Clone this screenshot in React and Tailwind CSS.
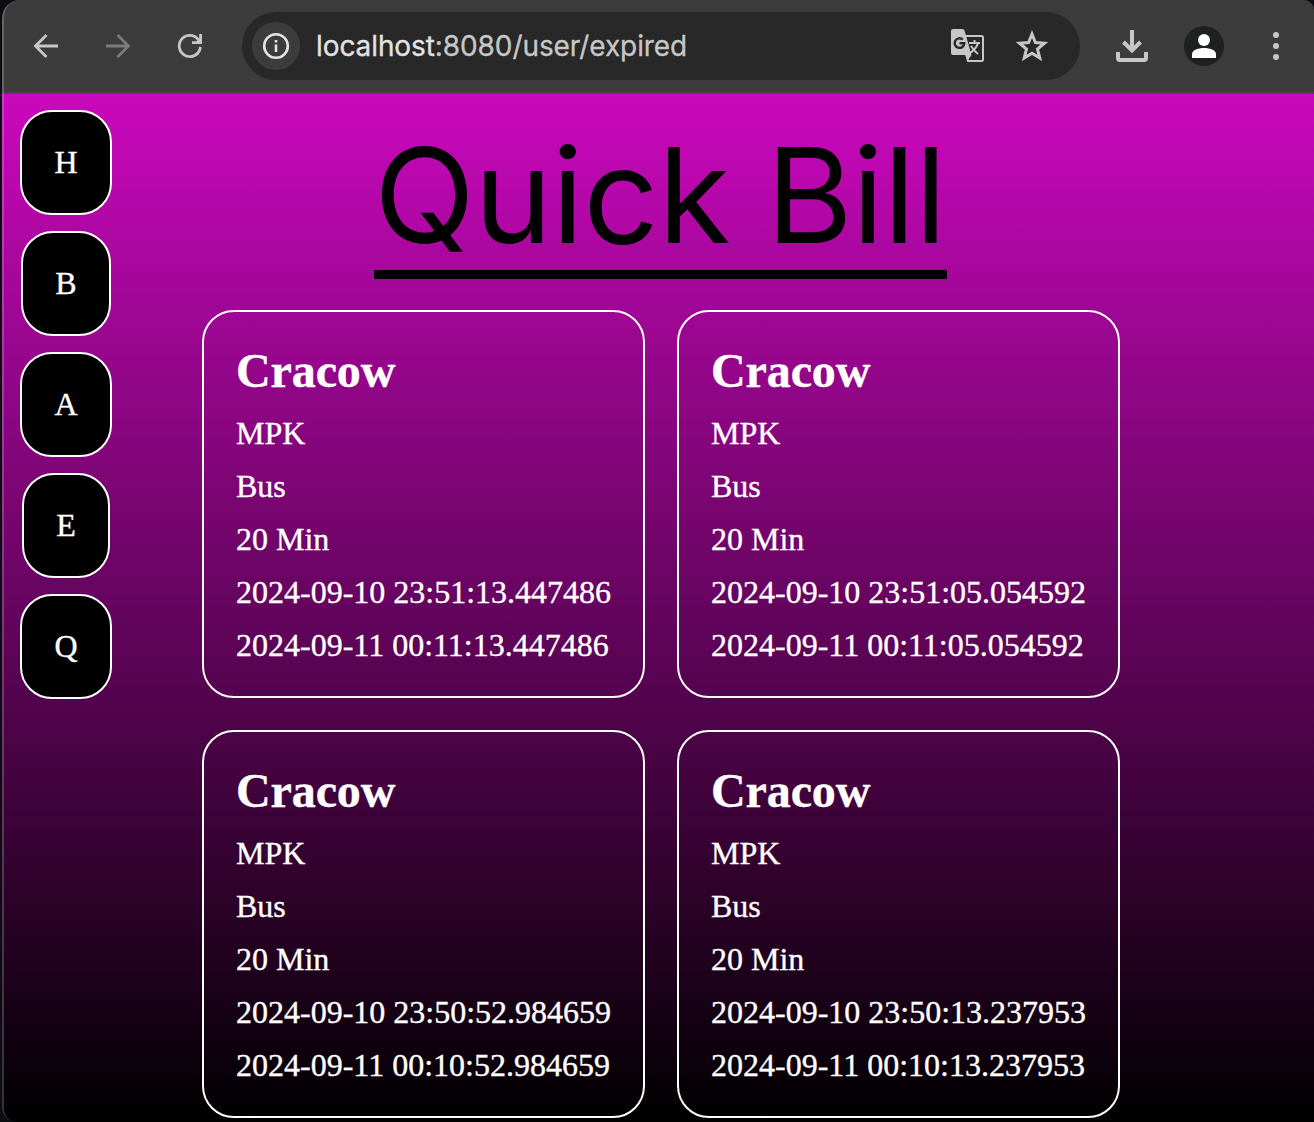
import React from 'react';

const tickets = [
  ['2024-09-10 23:51:13.447486', '2024-09-11 00:11:13.447486'],
  ['2024-09-10 23:51:05.054592', '2024-09-11 00:11:05.054592'],
  ['2024-09-10 23:50:52.984659', '2024-09-11 00:10:52.984659'],
  ['2024-09-10 23:50:13.237953', '2024-09-11 00:10:13.237953'],
];

function Toolbar() {
  return (
    <header className="flex h-[94px] shrink-0 items-center border-b-2 border-[#484848] bg-[#3c3c3c] pl-[26px] text-[#c7c7c7]">
      <svg className="size-9 shrink-0" viewBox="0 0 36 36" fill="none" stroke="currentColor" strokeWidth="2.8">
        <path d="M30 18H8M18.500 7L7.500 18L18.500 29" />
      </svg>
      <svg className="ml-9 size-9 shrink-0 text-[#7b7b7b]" viewBox="0 0 36 36" fill="none" stroke="currentColor" strokeWidth="2.8">
        <path d="M6 18H28M17.500 7L28.500 18L17.500 29" />
      </svg>
      <svg className="ml-9 size-9 shrink-0" viewBox="0 0 36 36" fill="none" stroke="currentColor" strokeWidth="2.8">
        <path d="M28.400 19A10.600 10.600 0 1 1 25.800 11L28 13.500" />
        <path d="M28.600 6V14.600H20" />
        <path d="M24 14L28 10V14Z" fill="currentColor" stroke="none" />
      </svg>
      <div className="ml-[34px] flex h-[68px] w-[838px] shrink-0 items-center rounded-full bg-[#282828] px-[10px]">
        <div className="flex size-12 items-center justify-center rounded-full bg-[#3c3c3c] text-[#e3e3e3]">
          <svg className="size-7" viewBox="0 0 28 28" fill="none" stroke="currentColor" strokeWidth="2.6">
            <circle cx="14" cy="14" r="11.8" />
            <path d="M14 12.500V20M14 8V10.600" />
          </svg>
        </div>
        <div className="ml-4 font-['Inter'] text-[28px] leading-none tracking-[-0.09px] text-[#e3e3e3] [-webkit-text-stroke:0.3px]">
          localhost<span className="text-[#c7c7c7]">:8080/user/expired</span>
        </div>
        <svg className="ml-auto h-9 w-9" viewBox="0 0 36 36" fill="none">
          <path d="M16 8H31.500Q33 8 33 9.500V31.500Q33 33 31.500 33H18L16 26" stroke="#c7c7c7" strokeWidth="2" />
          <path d="M19 15H30M24.500 12V15M28 15Q26 22 18 26M21 18Q24 23 28 26" stroke="#c7c7c7" strokeWidth="2" />
          <path d="M3 1H12.500Q14 1 14.500 2.500L21.500 27L18 32L16 27H3Q1 27 1 25V3Q1 1 3 1Z" fill="#c7c7c7" />
          <path d="M12.800 11.600A4.800 4.800 0 1 0 14.300 15.200H9.500" stroke="#282828" strokeWidth="2.400" />
        </svg>
        <svg className="mr-[22px] ml-[30px] size-8" viewBox="0 0 32 32" fill="none" stroke="#c7c7c7" strokeWidth="3">
          <path d="M16 4L19.400 12.500L28.500 13.200L21.500 19L23.800 28L16 23.200L8.200 28L10.500 19L3.500 13.200L12.600 12.500Z" />
        </svg>
      </div>
      <svg className="ml-9 h-9 w-8 shrink-0" viewBox="0 0 32 36" fill="none" stroke="currentColor" strokeWidth="4">
        <path d="M16 2V22M7.500 14L16 22.500L24.500 14M2 24V30Q2 32 4 32H28Q30 32 30 30V24" />
      </svg>
      <div className="ml-9 flex size-10 shrink-0 items-center justify-center rounded-full bg-[#1f2120]">
        <svg className="size-6" viewBox="0 0 24 24" fill="white">
          <circle cx="12" cy="6" r="6" />
          <path d="M0 24V20C0 15.500 8 14 12 14S24 15.500 24 20V24Z" />
        </svg>
      </div>
      <svg className="ml-[46px] h-7 w-3 shrink-0" viewBox="0 0 12 28" fill="currentColor">
        <circle cx="6" cy="3" r="3" />
        <circle cx="6" cy="14" r="3" />
        <circle cx="6" cy="25" r="3" />
      </svg>
    </header>
  );
}

function Ticket({ times }) {
  return (
    <article className="h-[388px] w-[443px] rounded-[32px] border-2 border-white px-8 pt-[31px] text-[32px] leading-[37px] text-white [-webkit-text-stroke:0.35px]">
      <h2 className="mb-[17px] text-[48px] leading-[55px] font-bold tracking-[-0.1px]">Cracow</h2>
      {['MPK', 'Bus', '20 Min', ...times].map((line) => (
        <p key={line} className="mb-4 whitespace-nowrap">{line}</p>
      ))}
    </article>
  );
}

export default function App() {
  return (
    <div className="h-[1122px] w-[1314px] overflow-hidden bg-[#0b0d12] pl-[2px]">
      <div className="relative flex h-full flex-col overflow-hidden rounded-tl-[18px] rounded-tr-[10px] rounded-bl-[14px]">
        <Toolbar />
        <main className="flex flex-1 bg-linear-to-b/srgb from-[#ca08bd] to-black pl-[2px] font-['Liberation_Serif',serif]">
          <nav className="flex w-[124px] shrink-0 flex-col items-center gap-4 pt-4">
            {['H', 'B', 'A', 'E', 'Q'].map((item) => (
              <a key={item} className="rounded-[32px] border-2 border-white bg-black p-8 text-[32px] leading-[37px] text-white [-webkit-text-stroke:0.35px]">{item}</a>
            ))}
          </nav>
          <section className="ml-[74px] w-[918px]">
            <h1 className="mt-[32px] ml-[172px] h-[153px] w-[573px] border-b-[9px] border-black font-['Inter'] text-[132px] leading-[138px] tracking-[-0.6px] whitespace-nowrap text-black">
              Quick Bill
            </h1>
            <div className="mt-[31px] grid grid-cols-2 gap-8">
              {tickets.map((times) => <Ticket key={times[0]} times={times} />)}
            </div>
          </section>
        </main>
        <div className="pointer-events-none absolute inset-0 rounded-tl-[18px] rounded-bl-[14px] border-l-2 border-white/20" />
      </div>
    </div>
  );
}
